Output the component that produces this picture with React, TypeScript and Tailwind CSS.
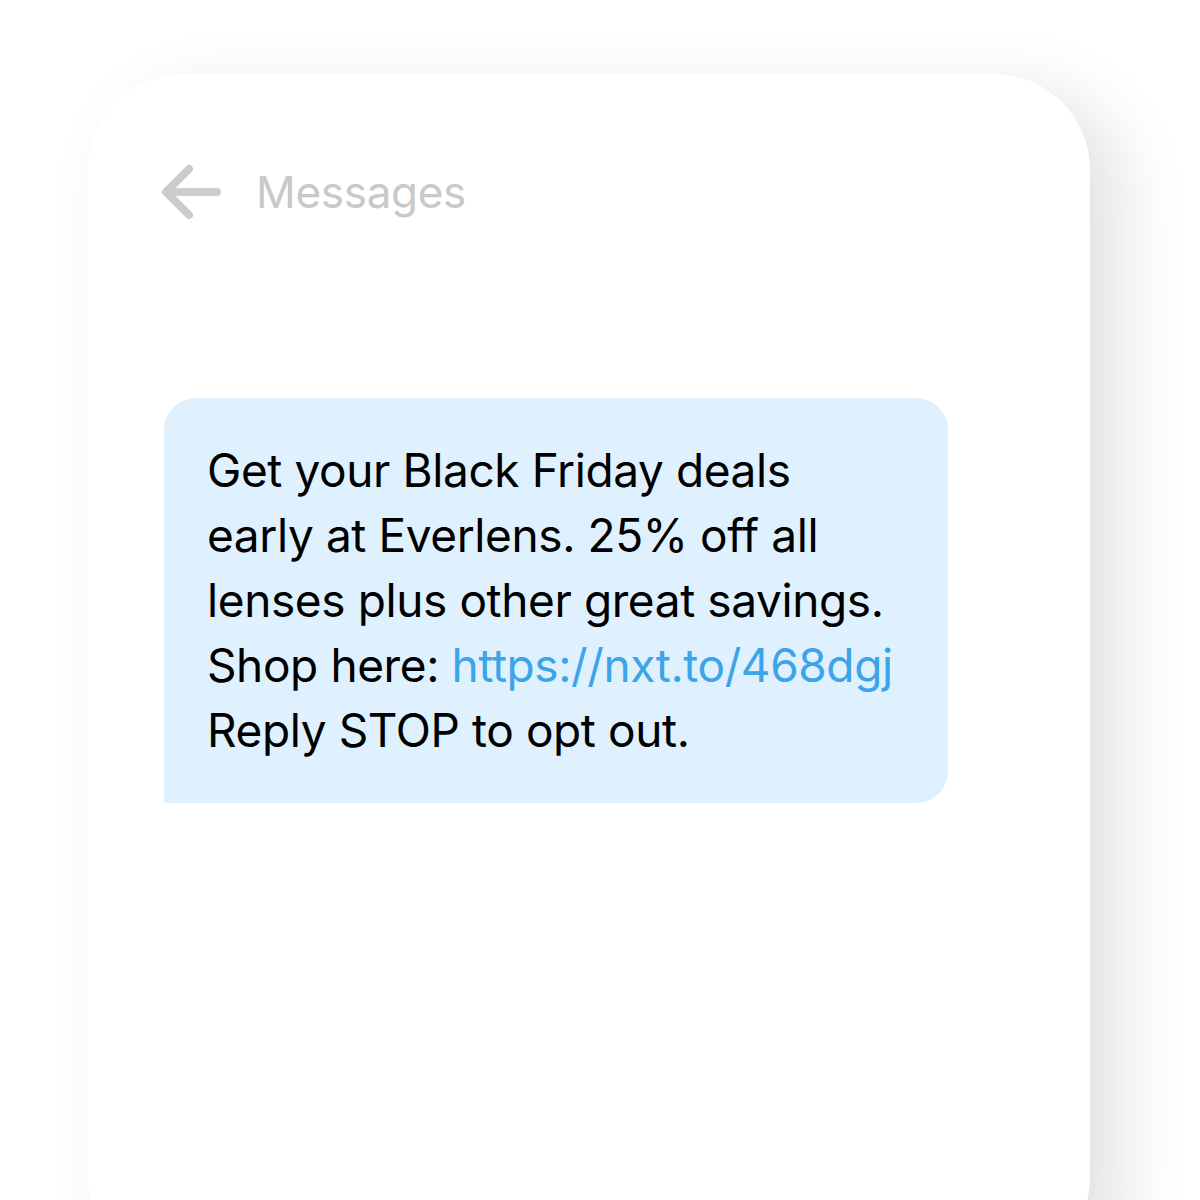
import React from 'react';

const BackArrow: React.FC = () => (
  <svg width="60" height="56" viewBox="0 0 60 56" fill="none" className="shrink-0">
    <path
      d="M56 28H6M28 5L5 28l23 23"
      stroke="#cccccc"
      strokeWidth="8"
      strokeLinecap="round"
      strokeLinejoin="round"
    />
  </svg>
);

const App: React.FC = () => {
  return (
    <div className="w-[1200px] h-[1200px] overflow-hidden bg-white font-['Inter',sans-serif]">
      <div className="ml-[88px] mt-[74px] w-[1002px] h-[1200px] rounded-[96px] bg-white shadow-[30px_20px_70px_rgba(0,0,0,0.12)]">
        {/* header */}
        <div className="flex items-center gap-[35px] pl-[73px] pt-[90px]">
          <BackArrow />
          <span className="text-[44px] leading-none text-[#c9c9c9] tracking-[-0.3px]">Messages</span>
        </div>

        {/* message bubble */}
        <div className="mt-[178px] ml-[76px] w-[784px] rounded-[32px] rounded-bl-none bg-[#dff0fe] pl-[43px] pr-[10px] pt-[40px] pb-[40px]">
          <p className="text-[46px] leading-[65px] text-black tracking-[-0.4px] whitespace-nowrap">
            Get your Black Friday deals
            <br />
            early at Everlens. 25% off all
            <br />
            lenses plus other great savings.
            <br />
            Shop here: <span className="text-[#3ca4e8]">https://nxt.to/468dgj</span>
            <br />
            Reply STOP to opt out.
          </p>
        </div>
      </div>
    </div>
  );
};

export default App;
